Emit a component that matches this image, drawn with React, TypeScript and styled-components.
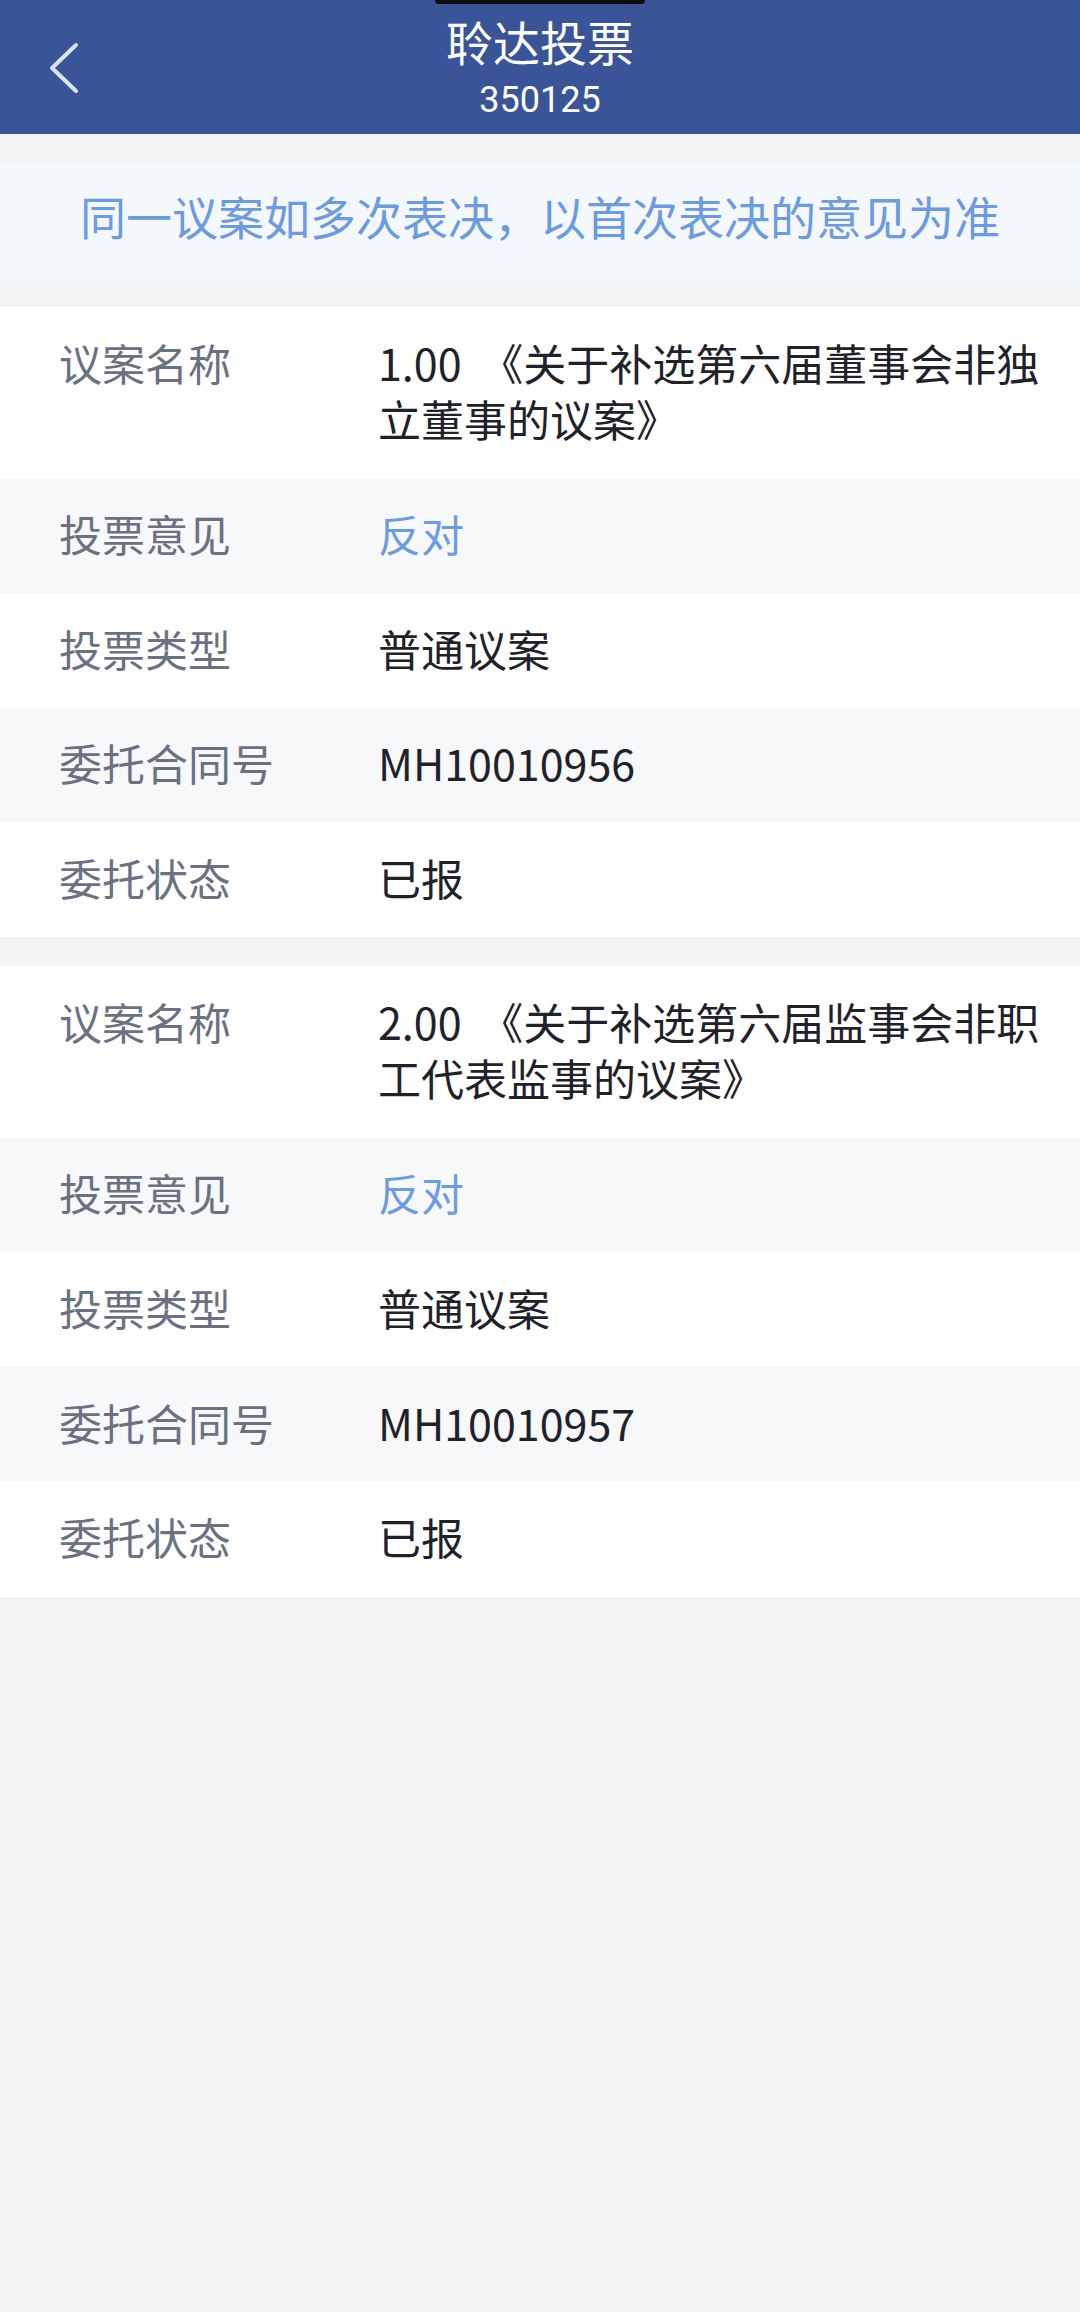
import React from "react";
import styled, { createGlobalStyle } from "styled-components";

const GlobalStyle = createGlobalStyle`
  html, body {
    margin: 0;
    padding: 0;
    background: #f2f3f5;
  }
  body {
    font-family: "Noto Sans CJK SC", "Noto Sans", Roboto, sans-serif;
    text-spacing-trim: space-all;
  }
  * { box-sizing: border-box; }
`;

const Page = styled.div`
  width: 1080px;
  min-height: 2312px;
  background: #f2f3f5;
  display: flex;
  flex-direction: column;
  position: relative;
`;

const Notch = styled.div`
  position: absolute;
  top: 0;
  left: 435px;
  width: 210px;
  height: 4px;
  background: #0d0d0f;
  border-radius: 0 0 6px 6px;
`;

const Header = styled.header`
  height: 134px;
  background: #3a5597;
  display: grid;
  grid-template-columns: 160px 1fr 160px;
  align-items: start;
`;

const BackButton = styled.button`
  border: 0;
  background: transparent;
  padding: 37px 0 0 46px;
  display: flex;
  align-items: flex-start;
  justify-content: flex-start;
`;

const TitleBlock = styled.div`
  display: flex;
  flex-direction: column;
  align-items: center;
  color: #ffffff;
  padding-top: 13px;
`;

const Title = styled.div`
  font-size: 47px;
  line-height: 56px;
  font-weight: 400;
`;

const Subtitle = styled.div`
  font-family: Roboto, "Noto Sans", sans-serif;
  font-size: 36px;
  line-height: 44px;
  margin-top: 9px;
`;

const NoticeWrap = styled.div`
  padding: 29px 0 28px;
`;

const Notice = styled.div`
  height: 116px;
  padding-bottom: 12px;
  background: #f4f7fc;
  display: flex;
  align-items: center;
  justify-content: center;
  color: #6b9be0;
  font-size: 46px;
`;

const Cards = styled.div`
  display: flex;
  flex-direction: column;
  gap: 29px;
`;

const Card = styled.section`
  display: flex;
  flex-direction: column;
`;

const Row = styled.div<{ $shade: boolean }>`
  display: grid;
  grid-template-columns: 319px 1fr;
  padding: 26.5px 36px 31.75px 59px;
  background: ${(p) => (p.$shade ? "#f7f8fa" : "#ffffff")};
  font-size: 43px;
  line-height: 56.5px;
`;

const Label = styled.div`
  color: #6a7180;
`;

const Value = styled.div<{ $accent?: boolean }>`
  color: ${(p) => (p.$accent ? "#6b9be0" : "#1f2229")};
  word-break: break-all;
  word-spacing: 9px;
`;

type Item = { label: string; value: string; accent?: boolean };

const data: Item[][] = [
  [
    { label: "议案名称", value: "1.00 《关于补选第六届董事会非独立董事的议案》" },
    { label: "投票意见", value: "反对", accent: true },
    { label: "投票类型", value: "普通议案" },
    { label: "委托合同号", value: "MH10010956" },
    { label: "委托状态", value: "已报" },
  ],
  [
    { label: "议案名称", value: "2.00 《关于补选第六届监事会非职工代表监事的议案》" },
    { label: "投票意见", value: "反对", accent: true },
    { label: "投票类型", value: "普通议案" },
    { label: "委托合同号", value: "MH10010957" },
    { label: "委托状态", value: "已报" },
  ],
];

const BackIcon = () => (
  <svg width="40" height="62" viewBox="0 0 40 62" fill="none">
    <path
      d="M30 8 L6 31 L30 54"
      stroke="#dbe2f0"
      strokeWidth="4"
      strokeLinecap="round"
      strokeLinejoin="round"
    />
  </svg>
);

export default function App() {
  return (
    <>
      <GlobalStyle />
      <Page>
        <Notch />
        <Header>
          <BackButton aria-label="返回">
            <BackIcon />
          </BackButton>
          <TitleBlock>
            <Title>聆达投票</Title>
            <Subtitle>350125</Subtitle>
          </TitleBlock>
          <div />
        </Header>
        <NoticeWrap>
          <Notice>同一议案如多次表决，以首次表决的意见为准</Notice>
        </NoticeWrap>
        <Cards>
          {data.map((card, ci) => (
            <Card key={ci}>
              {card.map((item, i) => (
                <Row key={i} $shade={i % 2 === 1}>
                  <Label>{item.label}</Label>
                  <Value $accent={item.accent}>{item.value}</Value>
                </Row>
              ))}
            </Card>
          ))}
        </Cards>
      </Page>
    </>
  );
}
